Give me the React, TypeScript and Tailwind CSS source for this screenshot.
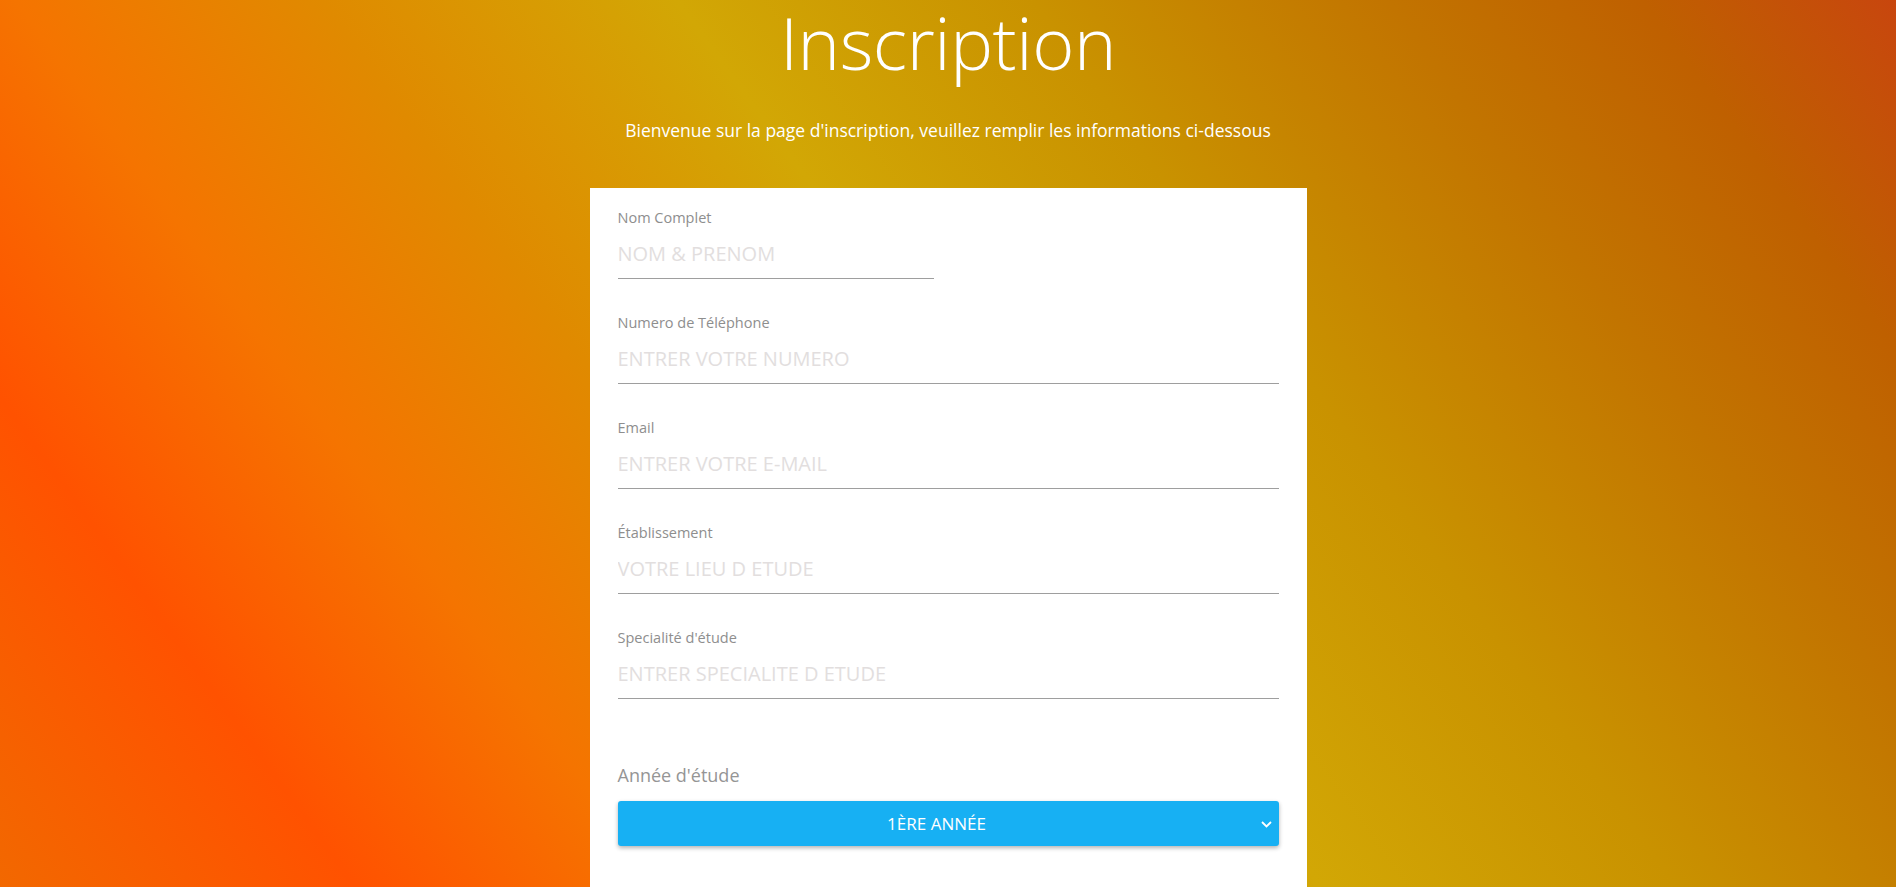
import React from "react";

const fields = [
  { label: "Nom Complet", placeholder: "NOM & PRENOM", short: true },
  { label: "Numero de Téléphone", placeholder: "ENTRER VOTRE NUMERO" },
  { label: "Email", placeholder: "ENTRER VOTRE E-MAIL" },
  { label: "Établissement", placeholder: "VOTRE LIEU D ETUDE" },
  { label: "Specialité d'étude", placeholder: "ENTRER SPECIALITE D ETUDE" },
];

export default function App() {
  return (
    /* Page with gradient background */
    <div className="h-screen overflow-hidden bg-[linear-gradient(54deg,#f26800_0%,#ff5200_14%,#f57400_26%,#e08a00_38%,#d2a705_52%,#c99200_66%,#c27400_80%,#bf6000_90%,#c8460e_100%)] font-['Open_Sans','Noto_Sans',sans-serif] text-white">
      <div className="flex flex-col items-center">
        {/* Header */}
        <h1 className="text-[72px] font-light leading-[84px] tracking-[-0.4px]">
          Inscription
        </h1>
        <p className="mt-[34px] text-[17.5px] leading-[24px]">
          Bienvenue sur la page d'inscription, veuillez remplir les informations ci-dessous
        </p>

        {/* Form card */}
        <div className="mt-[46px] w-[717px] bg-white px-[28px] pt-[20px] pb-[120px]">
          {fields.map((field) => (
            <div key={field.label} className="mb-[34px]">
              <label className="block text-[14.5px] leading-[20px] text-[#8e8e8e]">
                {field.label}
              </label>
              <input
                type="text"
                placeholder={field.placeholder}
                className={`${field.short ? "w-[316px]" : "w-full"} h-[51px] border-b border-[#9e9e9e] bg-transparent text-[20px] text-gray-700 outline-none placeholder:text-[#e2dede]`}
              />
            </div>
          ))}

          {/* Study year */}
          <div className="mt-[63px]">
            <p className="text-[18px] leading-[26px] text-[#959595]">Année d'étude</p>
            <div className="relative mt-[13px] flex h-[45px] items-center justify-center rounded-[3px] bg-[#17b0f3] pr-[23px] shadow-[0_2px_4px_rgba(0,0,0,0.3)]">
              <span className="text-[17px] text-white">1ÈRE ANNÉE</span>
              <svg
                className="absolute right-[7px] top-[20px]"
                width="11"
                height="7"
                viewBox="0 0 11 7"
                fill="none"
              >
                <polyline points="1,1 5.5,5.5 10,1" stroke="white" strokeWidth="1.8" />
              </svg>
            </div>
          </div>
        </div>
      </div>
    </div>
  );
}
